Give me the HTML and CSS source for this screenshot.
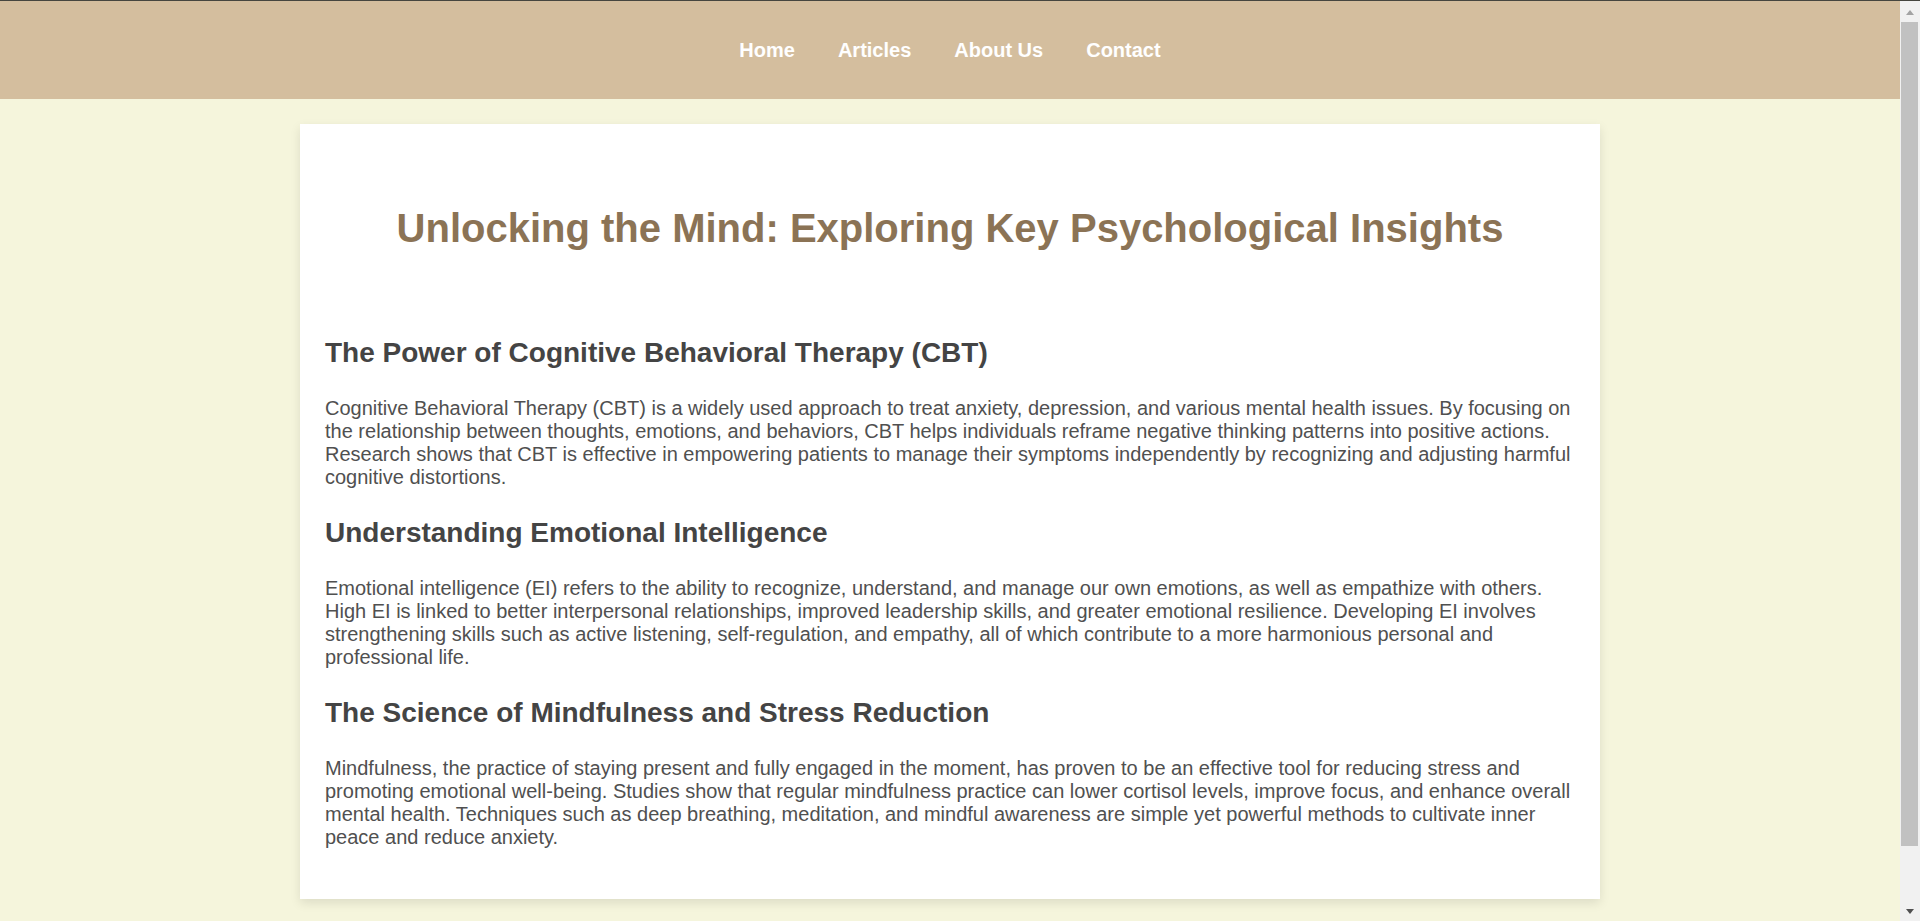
FILE: index.html
```html
<!DOCTYPE html>
<html lang="en">
<head>
<meta charset="utf-8">
<title>Unlocking the Mind: Exploring Key Psychological Insights</title>
<link rel="stylesheet" href="styles.css">
</head>
<body>
<div class="topline"></div>
<div class="page">
  <header class="site-header">
    <nav class="nav">
      <a href="#" class="nav-link">Home</a>
      <a href="#" class="nav-link">Articles</a>
      <a href="#" class="nav-link">About Us</a>
      <a href="#" class="nav-link">Contact</a>
    </nav>
  </header>
  <main class="main">
    <article class="card">
      <h1 class="title">Unlocking the Mind: Exploring Key Psychological Insights</h1>
      <section class="section">
        <h2 class="section-title">The Power of Cognitive Behavioral Therapy (CBT)</h2>
        <p class="section-text">Cognitive Behavioral Therapy (CBT) is a widely used approach to treat anxiety, depression, and various mental health issues. By focusing on the relationship between thoughts, emotions, and behaviors, CBT helps individuals reframe negative thinking patterns into positive actions. Research shows that CBT is effective in empowering patients to manage their symptoms independently by recognizing and adjusting harmful cognitive distortions.</p>
      </section>
      <section class="section">
        <h2 class="section-title">Understanding Emotional Intelligence</h2>
        <p class="section-text">Emotional intelligence (EI) refers to the ability to recognize, understand, and manage our own emotions, as well as empathize with others. High EI is linked to better interpersonal relationships, improved leadership skills, and greater emotional resilience. Developing EI involves strengthening skills such as active listening, self-regulation, and empathy, all of which contribute to a more harmonious personal and professional life.</p>
      </section>
      <section class="section">
        <h2 class="section-title">The Science of Mindfulness and Stress Reduction</h2>
        <p class="section-text">Mindfulness, the practice of staying present and fully engaged in the moment, has proven to be an effective tool for reducing stress and promoting emotional well-being. Studies show that regular mindfulness practice can lower cortisol levels, improve focus, and enhance overall mental health. Techniques such as deep breathing, meditation, and mindful awareness are simple yet powerful methods to cultivate inner peace and reduce anxiety.</p>
      </section>
    </article>
  </main>
</div>
<div class="scrollbar" aria-hidden="true">
  <div class="sb-button"><span class="sb-arrow sb-arrow-up"></span></div>
  <div class="sb-track"><div class="sb-thumb"></div></div>
  <div class="sb-button"><span class="sb-arrow sb-arrow-down"></span></div>
</div>
</body>
</html>
```
FILE: styles.css
```css
html {
  overflow: hidden;
}

body {
  margin: 0;
  background: #f5f5dc;
  font-family: "Liberation Sans", Arial, sans-serif;
}

.topline {
  position: fixed;
  top: 0;
  left: 0;
  right: 0;
  height: 1px;
  background: #46463f;
  z-index: 10;
}

.page {
  margin-right: 20px;
  padding-top: 1px;
}

.site-header {
  background: #d4be9e;
  height: 98px;
  display: flex;
  align-items: center;
  justify-content: center;
}

.nav {
  display: flex;
  gap: 43px;
}

.nav-link {
  color: #ffffff;
  font-weight: bold;
  font-size: 20px;
  text-decoration: none;
}

.main {
  padding: 25px 0 20px;
}

.card {
  width: 1300px;
  box-sizing: border-box;
  margin: 0 auto;
  background: #ffffff;
  box-shadow: 0 4px 10px rgba(0, 0, 0, 0.1);
  padding: 30px 25px;
}

.title {
  font-size: 40px;
  line-height: normal;
  color: #8b7355;
  text-align: center;
  margin: 52px 0 86px;
}

.section-title {
  font-size: 28px;
  line-height: normal;
  color: #444444;
  margin: 28px 0;
}

.section-text {
  font-size: 20px;
  line-height: normal;
  color: #505050;
  margin: 20px 0;
}

.scrollbar {
  position: fixed;
  top: 0;
  right: 0;
  bottom: 0;
  width: 20px;
  background: #f1f1f1;
  display: flex;
  flex-direction: column;
}

.sb-button {
  height: 21px;
  display: flex;
  align-items: center;
  justify-content: center;
}

.sb-arrow {
  width: 0;
  height: 0;
  border-left: 4.5px solid transparent;
  border-right: 4.5px solid transparent;
}

.sb-arrow-up {
  border-bottom: 5px solid #a3a3a3;
  margin-top: 4px;
}

.sb-arrow-down {
  border-top: 5px solid #505050;
  margin-top: 1px;
}

.sb-track {
  flex: 1;
  padding: 1px 2px 0 1px;
}

.sb-thumb {
  height: 824px;
  background: #c1c1c1;
}
```
